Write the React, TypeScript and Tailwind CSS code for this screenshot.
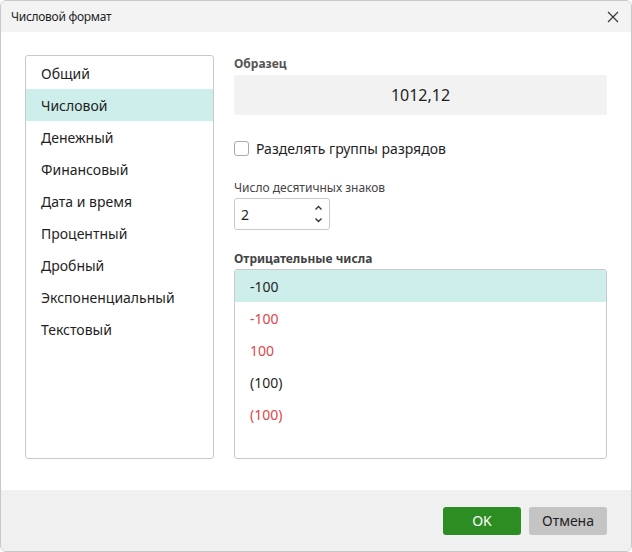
const categories = ['Общий', 'Числовой', 'Денежный', 'Финансовый', 'Дата и время', 'Процентный', 'Дробный', 'Экспоненциальный', 'Текстовый'];
const negatives = [
  { text: '-100', cls: 'text-[#1f1f1f]' },
  { text: '-100', cls: 'text-[#e0454b]' },
  { text: '100', cls: 'text-[#e0454b]' },
  { text: '(100)', cls: 'text-[#1f1f1f]' },
  { text: '(100)', cls: 'text-[#e0454b]' },
];

export default function App() {
  return (
    <div className="w-[632px] h-[552px] flex flex-col bg-white border border-[#c8c8c8] rounded-[6px] overflow-hidden text-[#1f1f1f]" style={{ fontFamily: '"Noto Sans", "Open Sans", sans-serif' }}>
      <div className="h-[31px] shrink-0 bg-[#f3f3f3] flex items-center justify-between pl-[10px] pr-[12px]">
        <span className="text-[12px] tracking-[-0.3px]">Числовой формат</span>
        <svg width="12" height="12" viewBox="0 0 12 12" stroke="#333" strokeWidth="1.1"><path d="M1 1L11 11M11 1L1 11" /></svg>
      </div>
      <div className="flex-1 flex gap-[20px] pl-[24px] pr-[24px] pt-[23px] pb-[31px]">
        <div className="w-[189px] border border-[#c9c9c9] rounded-[3px] py-[1px]">
          {categories.map((c, i) => (
            <div key={c} className={`h-[32px] flex items-center px-[15px] text-[14px] ${i === 1 ? 'bg-[#cdeeea]' : ''}`}>{c}</div>
          ))}
        </div>
        <div className="flex-1 flex flex-col">
          <div className="text-[12px] font-bold text-[#555] leading-[16px] mt-[1px]">Образец</div>
          <div className="mt-[3px] h-[40px] bg-[#f2f2f2] rounded-[2px] flex items-center justify-center text-[16px]">1012,12</div>
          <label className="mt-[23px] flex items-center gap-[7px] text-[14px]">
            <span className="w-[15px] h-[15px] border border-[#aaa] rounded-[3px] bg-white" />
            Разделять группы разрядов
          </label>
          <div className="mt-[21px] text-[12px] text-[#444] leading-[16px]">Число десятичных знаков</div>
          <div className="mt-[2px] w-[96px] h-[32px] border border-[#c9c9c9] rounded-[3px] flex items-center justify-between pl-[6px] pr-[6px] text-[14px]">
            <span>2</span>
            <svg width="9" height="22" viewBox="0 0 9 22" fill="none" stroke="#333" strokeWidth="1.4"><path d="M1.5 6.5L4.5 3.5L7.5 6.5M1.5 15.5L4.5 18.5L7.5 15.5" /></svg>
          </div>
          <div className="mt-[21px] text-[12px] font-bold text-[#444] leading-[16px]">Отрицательные числа</div>
          <div className="mt-[2px] flex-1 border border-[#c9c9c9] rounded-[3px]">
            {negatives.map((n, i) => (
              <div key={i} className={`h-[32px] flex items-center px-[15px] text-[14px] ${n.cls} ${i === 0 ? 'bg-[#cdeeea]' : ''}`}>{n.text}</div>
            ))}
          </div>
        </div>
      </div>
      <div className="h-[61px] shrink-0 bg-[#f0f0f0] flex items-center justify-end gap-[8px] pr-[24px]">
        <button className="w-[78px] h-[28px] rounded-[3px] bg-[#2d8d22] text-white text-[14px]">OK</button>
        <button className="w-[78px] h-[28px] rounded-[3px] bg-[#c4c4c4] text-[#222] text-[14px]">Отмена</button>
      </div>
    </div>
  );
}
